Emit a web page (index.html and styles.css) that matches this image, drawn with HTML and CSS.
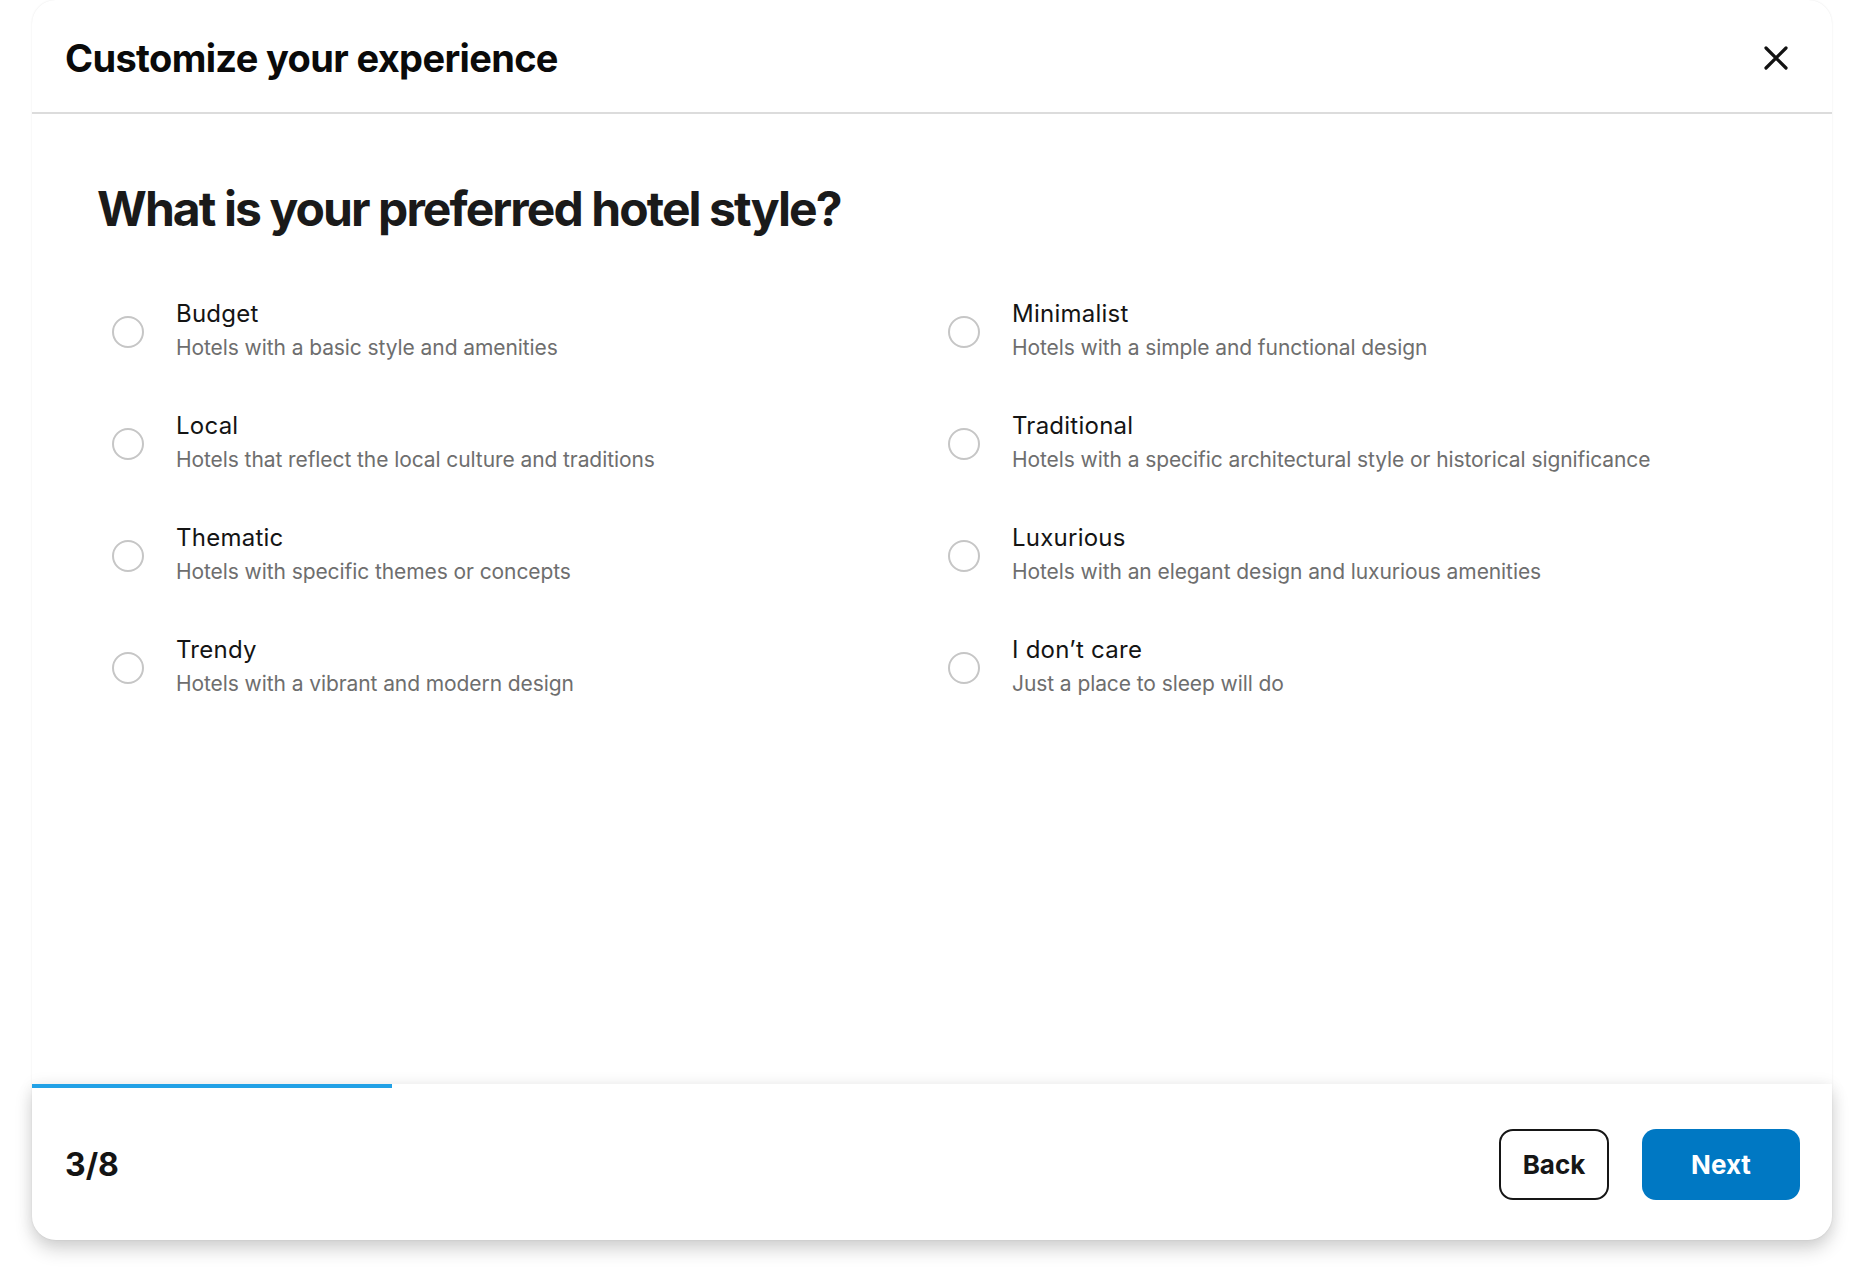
FILE: index.html
```html
<!DOCTYPE html>
<html lang="en">
<head>
<meta charset="utf-8">
<title>Customize your experience</title>
<link rel="stylesheet" href="styles.css">
</head>
<body>
<div class="page">
  <div class="modal">
    <header class="modal-header">
      <h1 class="modal-title">Customize your experience</h1>
      <button class="close-btn" aria-label="Close">
        <svg width="24" height="24" viewBox="0 0 24 24" fill="none" stroke="#121212" stroke-width="3.2" stroke-linecap="round"><path d="M2 2L22 22M22 2L2 22"/></svg>
      </button>
    </header>
    <main class="modal-body">
      <h2 class="question">What is your preferred hotel style?</h2>
      <div class="options">
        <label class="option"><span class="radio"></span><span class="option-text"><span class="option-title">Budget</span><span class="option-desc">Hotels with a basic style and amenities</span></span></label>
        <label class="option"><span class="radio"></span><span class="option-text"><span class="option-title">Minimalist</span><span class="option-desc">Hotels with a simple and functional design</span></span></label>
        <label class="option"><span class="radio"></span><span class="option-text"><span class="option-title">Local</span><span class="option-desc">Hotels that reflect the local culture and traditions</span></span></label>
        <label class="option"><span class="radio"></span><span class="option-text"><span class="option-title">Traditional</span><span class="option-desc">Hotels with a specific architectural style or historical significance</span></span></label>
        <label class="option"><span class="radio"></span><span class="option-text"><span class="option-title">Thematic</span><span class="option-desc">Hotels with specific themes or concepts</span></span></label>
        <label class="option"><span class="radio"></span><span class="option-text"><span class="option-title">Luxurious</span><span class="option-desc">Hotels with an elegant design and luxurious amenities</span></span></label>
        <label class="option"><span class="radio"></span><span class="option-text"><span class="option-title">Trendy</span><span class="option-desc">Hotels with a vibrant and modern design</span></span></label>
        <label class="option"><span class="radio"></span><span class="option-text"><span class="option-title">I don’t care</span><span class="option-desc">Just a place to sleep will do</span></span></label>
      </div>
    </main>
    <footer class="modal-footer">
      <div class="progress"><div class="progress-fill"></div></div>
      <div class="footer-row">
        <span class="step">3/8</span>
        <div class="actions">
          <button class="btn btn-back">Back</button>
          <button class="btn btn-next">Next</button>
        </div>
      </div>
    </footer>
  </div>
</div>
</body>
</html>
```

FILE: styles.css
```css
* { box-sizing: border-box; }
html, body { margin: 0; padding: 0; background: #ffffff; }
body {
  font-family: Inter, "Noto Sans", sans-serif;
  color: #1a1a1a;
  width: 1864px;
  height: 1280px;
  overflow: hidden;
}
.page {
  padding: 0 32px 40px 32px;
  height: 1280px;
}
.modal {
  height: 1240px;
  display: flex;
  flex-direction: column;
  background: #fff;
  border-radius: 24px;
  box-shadow: 0 0 2px rgba(0,0,0,0.10);
}
.modal-header {
  height: 114px;
  border-bottom: 2px solid #dcdcdc;
  display: flex;
  align-items: center;
  justify-content: space-between;
  padding: 4px 44px 0 33px;
}
.modal-title {
  margin: 0;
  font-size: 38px;
  font-weight: 700;
  letter-spacing: -0.017em;
  color: #0a0a0a;
}
.close-btn {
  border: 0;
  background: transparent;
  padding: 0;
  width: 24px;
  height: 24px;
  display: flex;
}
.modal-body {
  flex: 1;
  padding: 66px 0 0 65px;
}
.question {
  margin: 0 0 60px 0;
  font-size: 48px;
  line-height: 58px;
  font-weight: 700;
  letter-spacing: -0.04em;
  color: #1a1a1a;
}
.options {
  display: grid;
  grid-template-columns: 836px 1fr;
  row-gap: 45px;
  padding-left: 15px;
}
.option {
  display: flex;
  align-items: center;
  gap: 32px;
}
.radio {
  width: 32px;
  height: 32px;
  border-radius: 50%;
  border: 2px solid #c6c6c6;
  flex: none;
}
.option-text {
  display: flex;
  flex-direction: column;
}
.option-title {
  font-size: 24px;
  line-height: 32px;
  color: #141414;
  letter-spacing: 0.01em;
}
.option-desc {
  font-size: 21px;
  line-height: 35px;
  color: #6e6e6e;
  letter-spacing: -0.004em;
}
.modal-footer {
  height: 156px;
  border-radius: 0 0 24px 24px;
  background: #fff;
  box-shadow: 0 10px 18px rgba(0,0,0,0.16), 0 0 16px rgba(0,0,0,0.07);
  display: flex;
  flex-direction: column;
}
.progress {
  height: 4px;
}
.progress-fill {
  width: 360px;
  height: 4px;
  background: #22a1e6;
}
.footer-row {
  flex: 1;
  display: flex;
  align-items: center;
  justify-content: space-between;
  padding: 0 32px 0 33px;
}
.step {
  font-size: 32px;
  font-weight: 700;
  color: #141414;
}
.actions {
  display: flex;
  gap: 33px;
}
.btn {
  font-family: Inter, "Noto Sans", sans-serif;
  font-size: 26px;
  font-weight: 700;
  height: 71px;
  border-radius: 14px;
  cursor: pointer;
}
.btn-back {
  width: 110px;
  background: #fff;
  border: 2px solid #161616;
  color: #161616;
}
.btn-next {
  width: 158px;
  background: #0078c3;
  border: 0;
  color: #fff;
}
```
